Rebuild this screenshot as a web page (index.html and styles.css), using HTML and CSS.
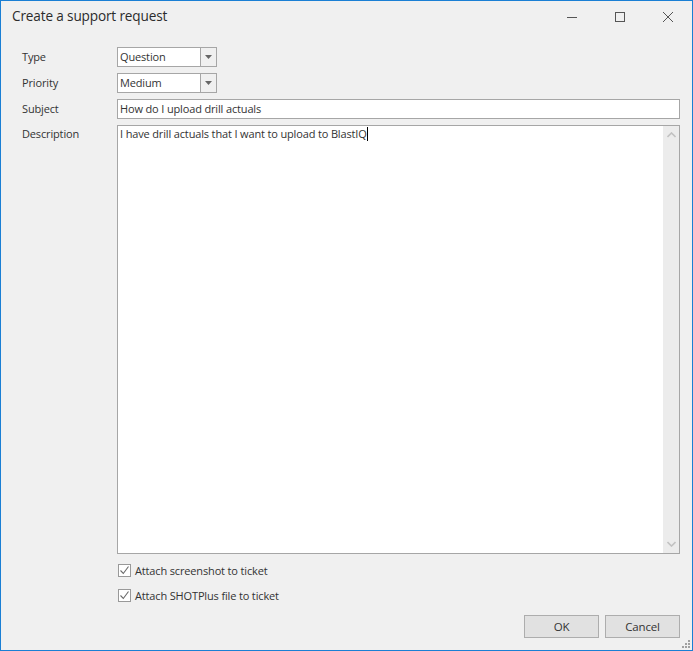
FILE: index.html
```html
<!DOCTYPE html>
<html>
<head>
<meta charset="utf-8">
<link rel="stylesheet" href="styles.css">
</head>
<body>
<div class="window">
  <div class="titlebar">
    <div class="title">Create a support request</div>
    <div class="controls">
      <span class="ctl"><svg width="12" height="12" viewBox="0 0 12 12"><path d="M1 6.5h10" stroke="#555" stroke-width="1"/></svg></span>
      <span class="ctl"><svg width="12" height="12" viewBox="0 0 12 12"><rect x="1.5" y="1.5" width="9" height="9" fill="none" stroke="#555" stroke-width="1"/></svg></span>
      <span class="ctl"><svg width="12" height="12" viewBox="0 0 12 12"><path d="M1 1l10 10M11 1L1 11" stroke="#555" stroke-width="1"/></svg></span>
    </div>
  </div>
  <div class="form">
    <div class="row">
      <div class="label">Type</div>
      <div class="combo"><span class="combo-text">Question</span><span class="combo-btn"><svg width="7" height="4" viewBox="0 0 7 4"><path d="M0 0h7L3.5 4z" fill="#666"/></svg></span></div>
    </div>
    <div class="row">
      <div class="label">Priority</div>
      <div class="combo"><span class="combo-text">Medium</span><span class="combo-btn"><svg width="7" height="4" viewBox="0 0 7 4"><path d="M0 0h7L3.5 4z" fill="#666"/></svg></span></div>
    </div>
    <div class="row">
      <div class="label">Subject</div>
      <div class="input">How do I upload drill actuals</div>
    </div>
    <div class="row row-desc">
      <div class="label">Description</div>
      <div class="memo">
        <div class="memo-text">I have drill actuals that I want to upload to BlastIQ<span class="caret"></span></div>
        <div class="scrollbar">
          <svg width="9" height="6" viewBox="0 0 9 6"><path d="M0.5 5L4.5 1L8.5 5" fill="none" stroke="#c2c2c2" stroke-width="1.6"/></svg>
          <svg width="9" height="6" viewBox="0 0 9 6"><path d="M0.5 1L4.5 5L8.5 1" fill="none" stroke="#c2c2c2" stroke-width="1.6"/></svg>
        </div>
      </div>
    </div>
    <div class="checks">
      <label class="check"><span class="box"><svg width="11" height="11" viewBox="0 0 11 11"><path d="M1.5 5.5l2.8 3L9.5 1.5" fill="none" stroke="#6a6a6a" stroke-width="1.1"/></svg></span>Attach screenshot to ticket</label>
      <label class="check"><span class="box"><svg width="11" height="11" viewBox="0 0 11 11"><path d="M1.5 5.5l2.8 3L9.5 1.5" fill="none" stroke="#6a6a6a" stroke-width="1.1"/></svg></span>Attach SHOTPlus file to ticket</label>
    </div>
    <div class="buttons">
      <div class="btn">OK</div>
      <div class="btn">Cancel</div>
    </div>
  </div>
  <svg class="grip" width="10" height="10" viewBox="0 0 10 10">
    <rect x="7" y="1" width="2" height="2" fill="#a0a0a0"/>
    <rect x="4" y="4" width="2" height="2" fill="#a0a0a0"/>
    <rect x="7" y="4" width="2" height="2" fill="#a0a0a0"/>
    <rect x="1" y="7" width="2" height="2" fill="#a0a0a0"/>
    <rect x="4" y="7" width="2" height="2" fill="#a0a0a0"/>
    <rect x="7" y="7" width="2" height="2" fill="#a0a0a0"/>
  </svg>
</div>
</body>
</html>
```
FILE: styles.css
```css
* { box-sizing: border-box; }
html, body { margin: 0; padding: 0; background: #f0f0f0; }
body {
  font-family: "Open Sans", "Noto Sans", "DejaVu Sans", sans-serif;
  font-size: 11px;
  letter-spacing: -0.15px;
  color: #333;
}
.window {
  position: relative;
  width: 693px;
  height: 651px;
  border: 1px solid #1a7fd4;
  background: #f0f0f0;
  display: flex;
  flex-direction: column;
}
.titlebar {
  height: 31px;
  display: flex;
  align-items: center;
  justify-content: space-between;
}
.title {
  padding-left: 11px;
  font-size: 13.6px;
  letter-spacing: -0.15px;
  color: #2b2b2b;
  margin-top: -2px;
}
.controls { display: flex; height: 100%; }
.ctl {
  width: 48px;
  height: 100%;
  display: flex;
  align-items: center;
  justify-content: center;
}
.form {
  flex: 1;
  display: flex;
  flex-direction: column;
  padding: 15px 12px 12px 21px;
}
.row {
  display: flex;
  align-items: flex-start;
  margin-bottom: 6px;
}
.label {
  width: 95px;
  line-height: 20px;
  color: #333;
}
.combo {
  width: 100px;
  height: 20px;
  border: 1px solid #a6a6a6;
  background: #fff;
  display: flex;
}
.combo-text {
  flex: 1;
  padding-left: 2px;
  line-height: 18px;
}
.combo-btn {
  width: 16px;
  border-left: 1px solid #a6a6a6;
  background: #f0f0f0;
  display: flex;
  align-items: center;
  justify-content: center;
}
.input {
  flex: 1;
  height: 20px;
  border: 1px solid #a6a6a6;
  background: #fff;
  padding-left: 2px;
  line-height: 18px;
}
.row-desc { flex: 1; margin-bottom: 10px; }
.row-desc .label { line-height: 18px; }
.memo {
  flex: 1;
  align-self: stretch;
  border: 1px solid #a6a6a6;
  background: #fff;
  display: flex;
}
.memo-text {
  flex: 1;
  padding: 0 2px;
  line-height: 16px;
}
.caret {
  display: inline-block;
  width: 1px;
  height: 14px;
  background: #000;
  vertical-align: -3px;
}
.scrollbar {
  width: 16px;
  background: #ececec;
  display: flex;
  flex-direction: column;
  justify-content: space-between;
  align-items: center;
  padding: 6px 0;
}
.checks {
  padding-left: 96px;
  display: flex;
  flex-direction: column;
  gap: 12px;
}
.check {
  display: flex;
  align-items: center;
  height: 13px;
}
.box {
  width: 13px;
  height: 13px;
  border: 1px solid #999;
  background: #fff;
  margin-right: 4px;
  display: flex;
  align-items: center;
  justify-content: center;
}
.buttons {
  margin-top: 13px;
  display: flex;
  justify-content: flex-end;
  gap: 6px;
}
.btn {
  width: 75px;
  height: 23px;
  border: 1px solid #adadad;
  background: #e1e1e1;
  display: flex;
  align-items: center;
  justify-content: center;
  font-size: 11.5px;
}
.grip { position: absolute; right: 1px; bottom: 1px; }
```
